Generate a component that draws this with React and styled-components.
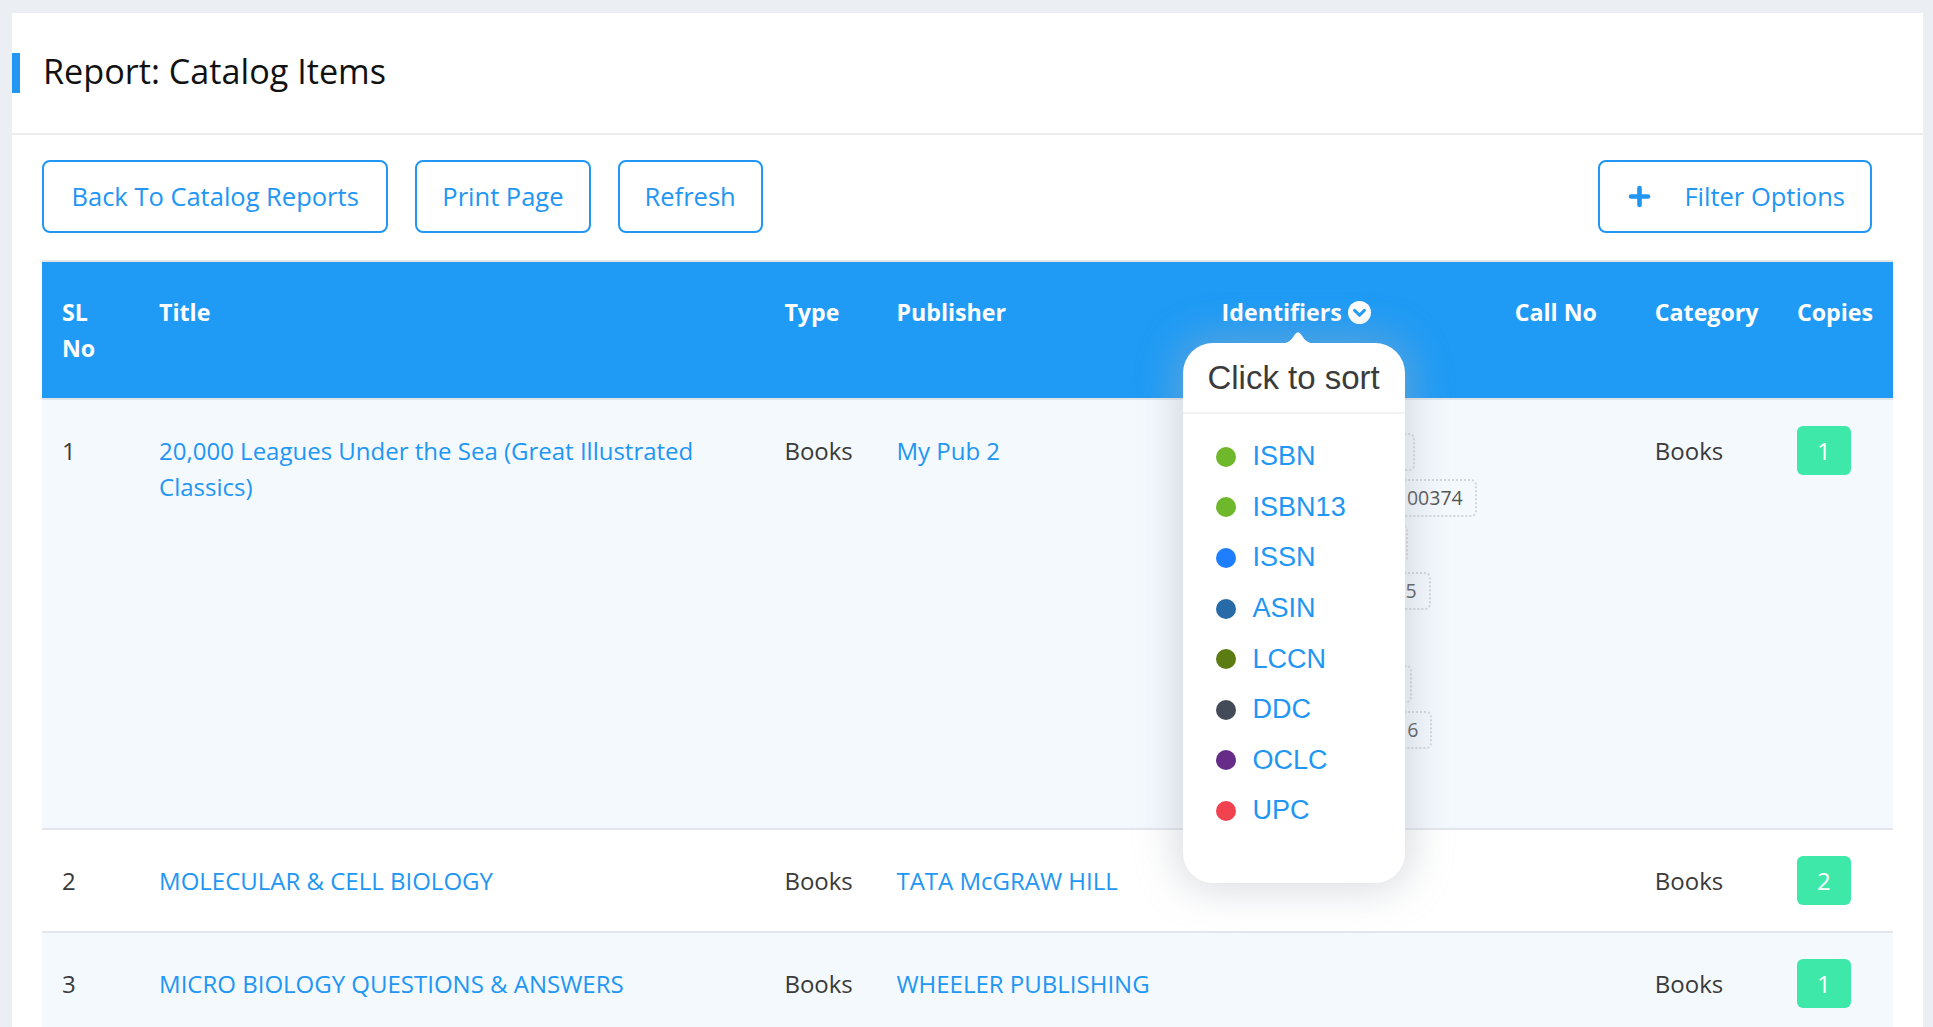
import React from "react";
import styled, { createGlobalStyle } from "styled-components";

const GlobalStyle = createGlobalStyle`
  html, body { margin: 0; padding: 0; }
  body {
    background: #ebeff3;
    font-family: "Open Sans", "Noto Sans", sans-serif;
    color: #3a3a3a;
  }
  * { box-sizing: border-box; }
`;

const BLUE = "#2196f3";
const HEAD_BLUE = "#1f9bf5";

const Card = styled.div`
  margin: 13px 10px 0 12px;
  background: #fff;
  min-height: calc(100vh - 13px);
`;

const PageHeader = styled.header`
  height: 122px;
  display: flex;
  align-items: center;
  border-bottom: 2px solid #ececec;
`;

const Accent = styled.span`
  width: 8px;
  height: 40px;
  background: ${BLUE};
  flex: none;
`;

const PageTitle = styled.h1`
  margin: 0 0 5px 23px;
  font-size: 34.2px;
  font-weight: 400;
  line-height: 1.2;
  color: #111;
`;

const Toolbar = styled.div`
  display: flex;
  align-items: center;
  gap: 27px;
  padding: 25px 30px 27px;
`;

const Button = styled.button`
  display: inline-flex;
  align-items: center;
  gap: 33px;
  font-family: "Open Sans", sans-serif;
  font-size: 25.5px;
  line-height: 37px;
  color: ${BLUE};
  background: #fff;
  border: 2px solid ${BLUE};
  border-radius: 8px;
  padding: 16px ${(p) => (p.$wide ? "27.5px" : "25px")};
  cursor: pointer;
  margin-left: ${(p) => (p.$right ? "auto" : "0")};
  margin-right: ${(p) => (p.$right ? "21px" : "0")};
  padding-left: ${(p) => (p.$right ? "28px" : p.$wide ? "27.5px" : "25px")};
`;

const TableWrap = styled.div`
  margin: 0 30px;
  border-top: 2px solid #e4e4e4;
`;

const Table = styled.table`
  width: 100%;
  border-collapse: collapse;
  table-layout: fixed;
`;

const Th = styled.th`
  position: relative;
  background: ${HEAD_BLUE};
  color: #fff;
  font-weight: 700;
  font-size: 23.2px;
  line-height: 36px;
  padding: 32px 20px;
  text-align: left;
  vertical-align: top;
  border-bottom: 2px solid #e1e5ea;
`;

const Row = styled.tr`
  background: ${(p) => (p.$alt ? "#f4f9fe" : "#fff")};
`;

const Td = styled.td`
  font-size: 24px;
  line-height: 36px;
  padding: 32.6px 20px;
  vertical-align: top;
  color: #3a3a3a;
  border-bottom: 2px solid #e3e6ea;
`;

const Link = styled.a`
  color: ${BLUE};
  text-decoration: none;
`;

const Badge = styled.span`
  display: inline-block;
  background: #3de8a8;
  color: #fff;
  border-radius: 6px;
  padding: 6.5px 20px;
  margin: -6.5px 0;
`;

const HeadLabel = styled.span`
  display: inline-flex;
  align-items: center;
  gap: 6px;
`;

const Chips = styled.div`
  display: flex;
  flex-direction: column;
  align-items: flex-start;
  gap: 8.4px;
`;

const Chip = styled.span`
  display: inline-block;
  white-space: nowrap;
  font-size: 19.5px;
  line-height: 28px;
  padding: 3px 12px;
  border: 2px dotted #d2d5d9;
  border-radius: 6px;
  color: #555;
`;

const Popover = styled.div`
  position: absolute;
  top: 81px;
  left: -19px;
  width: 222px;
  height: 540px;
  background: #fff;
  border-radius: 30px;
  box-shadow: 0 0 40px 6px rgba(168, 176, 186, 0.45);
  z-index: 5;
  font-family: "Liberation Sans", Arial, sans-serif;
  font-weight: 400;
  line-height: normal;
`;

const Arrow = styled.svg`
  position: absolute;
  top: -13px;
  left: 95px;
  display: block;
`;

const PopTitle = styled.div`
  height: 71px;
  display: flex;
  align-items: center;
  justify-content: center;
  font-size: 33px;
  color: #3b3b3b;
  border-bottom: 2px solid #f0f2f5;
`;

const PopList = styled.ul`
  list-style: none;
  margin: 0;
  padding: 17.5px 0 0 33px;
`;

const PopItem = styled.li`
  height: 50.6px;
  display: flex;
  align-items: center;
  gap: 17px;
  font-size: 27px;
  color: ${BLUE};
`;

const Dot = styled.span`
  width: 20px;
  height: 20px;
  border-radius: 50%;
  background: ${(p) => p.$color};
  flex: none;
`;

const ChevronCircle = () => (
  <svg width="23" height="23" viewBox="0 0 23 23">
    <circle cx="11.5" cy="11.5" r="11.5" fill="#fff" />
    <path
      d="M6.6 9.4 L11.5 14.3 L16.4 9.4"
      fill="none"
      stroke={HEAD_BLUE}
      strokeWidth="3"
      strokeLinecap="round"
      strokeLinejoin="round"
    />
  </svg>
);

const PlusIcon = () => (
  <svg width="23" height="23" viewBox="0 0 23 23">
    <path
      d="M11.5 3 V20 M3 11.5 H20"
      stroke={BLUE}
      strokeWidth="4.6"
      strokeLinecap="round"
    />
  </svg>
);

const sortOptions = [
  ["ISBN", "#6fb82c"],
  ["ISBN13", "#6fb82c"],
  ["ISSN", "#1f7dff"],
  ["ASIN", "#266aa7"],
  ["LCCN", "#5b7b13"],
  ["DDC", "#434b59"],
  ["OCLC", "#662c87"],
  ["UPC", "#f2414f"],
];

const identifiers = [
  "ISBN: 0866119876",
  "ISBN13: 978-0866100374",
  "ISSN: 00096-3402",
  "ASIN: B0000WDQK5",
  "LCCN: 9005271",
  "DDC: 428.642 VER",
  "OCLC: 10354109016",
  "UPC: 04390116",
];

const rows = [
  {
    sl: 1,
    title: "20,000 Leagues Under the Sea (Great Illustrated Classics)",
    type: "Books",
    publisher: "My Pub 2",
    ids: identifiers,
    category: "Books",
    copies: 1,
  },
  {
    sl: 2,
    title: "MOLECULAR & CELL BIOLOGY",
    type: "Books",
    publisher: "TATA McGRAW HILL",
    ids: [],
    category: "Books",
    copies: 2,
  },
  {
    sl: 3,
    title: "MICRO BIOLOGY QUESTIONS & ANSWERS",
    type: "Books",
    publisher: "WHEELER PUBLISHING",
    ids: [],
    category: "Books",
    copies: 1,
  },
];

const colWidths = [97, 625, 112, 325, 293, 140, 142, 116];

export default function App() {
  return (
    <>
      <GlobalStyle />
      <Card>
        <PageHeader>
          <Accent />
          <PageTitle>Report: Catalog Items</PageTitle>
        </PageHeader>
        <Toolbar>
          <Button $wide>Back To Catalog Reports</Button>
          <Button>Print Page</Button>
          <Button>Refresh</Button>
          <Button $right>
            <PlusIcon />
            Filter Options
          </Button>
        </Toolbar>
        <TableWrap>
          <Table>
            <colgroup>
              {colWidths.map((w, i) => (
                <col key={i} style={{ width: w }} />
              ))}
            </colgroup>
            <thead>
              <tr>
                <Th>SL No</Th>
                <Th>Title</Th>
                <Th>Type</Th>
                <Th>Publisher</Th>
                <Th>
                  <HeadLabel>
                    Identifiers
                    <ChevronCircle />
                  </HeadLabel>
                  <Popover>
                    <Arrow width="40" height="14" viewBox="0 0 40 14">
                      <path
                        d="M0 14 C9 14 13 11 16.5 5 Q20 -0.5 23.5 5 C27 11 31 14 40 14 Z"
                        fill="#fff"
                      />
                    </Arrow>
                    <PopTitle>Click to sort</PopTitle>
                    <PopList>
                      {sortOptions.map(([label, color]) => (
                        <PopItem key={label}>
                          <Dot $color={color} />
                          {label}
                        </PopItem>
                      ))}
                    </PopList>
                  </Popover>
                </Th>
                <Th>Call No</Th>
                <Th>Category</Th>
                <Th>Copies</Th>
              </tr>
            </thead>
            <tbody>
              {rows.map((r, i) => (
                <Row key={r.sl} $alt={i % 2 === 0}>
                  <Td>{r.sl}</Td>
                  <Td>
                    <Link href="#">{r.title}</Link>
                  </Td>
                  <Td>{r.type}</Td>
                  <Td>
                    <Link href="#">{r.publisher}</Link>
                  </Td>
                  <Td>
                    {r.ids.length > 0 && (
                      <Chips>
                        {r.ids.map((id) => (
                          <Chip key={id}>{id}</Chip>
                        ))}
                      </Chips>
                    )}
                  </Td>
                  <Td></Td>
                  <Td>{r.category}</Td>
                  <Td>
                    <Badge>{r.copies}</Badge>
                  </Td>
                </Row>
              ))}
            </tbody>
          </Table>
        </TableWrap>
      </Card>
    </>
  );
}
